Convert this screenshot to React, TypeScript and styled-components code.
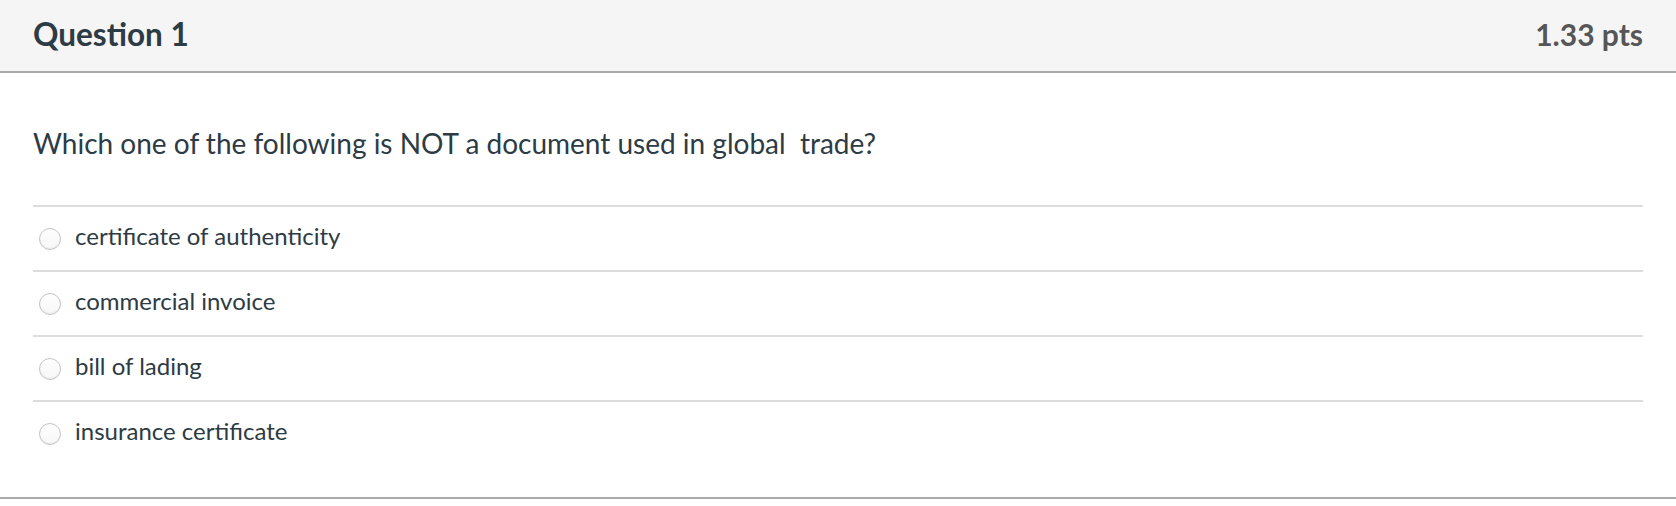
import React, { useState } from 'react';
import styled, { createGlobalStyle } from 'styled-components';

const GlobalStyle = createGlobalStyle`
  html, body {
    margin: 0;
    padding: 0;
    background: #fff;
    font-family: Lato, "Open Sans", "Liberation Sans", sans-serif;
  }
`;

const Card = styled.div`
  border-bottom: 2px solid #aaaaaa;
  margin-bottom: 6px;
`;

const Header = styled.div`
  height: 73px;
  box-sizing: border-box;
  padding: 0 33px 4px;
  display: flex;
  align-items: center;
  justify-content: space-between;
  background: #f5f5f5;
  border-bottom: 2px solid #aaaaaa;
`;

const Title = styled.h2`
  margin: 0;
  font-size: 31.5px;
  font-weight: 700;
  color: #2d3b45;
`;

const Points = styled.div`
  font-size: 30px;
  font-weight: 700;
  color: #565656;
`;

const Body = styled.div`
  padding: 0 33px 32px;
`;

const QuestionText = styled.p`
  margin: 0;
  padding: 50px 0 42px;
  font-size: 28px;
  line-height: 40px;
  color: #2d3b45;
  white-space: pre-wrap;
`;

const AnswerRow = styled.label`
  height: 65px;
  box-sizing: border-box;
  display: flex;
  align-items: center;
  gap: 14px;
  border-top: 2px solid #dddddd;
  padding-left: 6px;
  cursor: pointer;
`;

const Radio = styled.span<{ $checked: boolean }>`
  width: 22px;
  height: 22px;
  box-sizing: border-box;
  border-radius: 50%;
  border: 1px solid #c4c4c4;
  background: linear-gradient(#ffffff, #f6f6f6);
  box-shadow: inset 0 -1px 1px rgba(0, 0, 0, 0.05);
  display: flex;
  align-items: center;
  justify-content: center;
  flex-shrink: 0;
  &::after {
    content: '';
    width: 10px;
    height: 10px;
    border-radius: 50%;
    background: #2d3b45;
    display: ${(p) => (p.$checked ? 'block' : 'none')};
  }
`;

const AnswerText = styled.span`
  font-size: 24px;
  color: #2d3b45;
  padding-bottom: 6px;
`;

const answers = [
  'certificate of authenticity',
  'commercial invoice',
  'bill of lading',
  'insurance certificate',
];

const App: React.FC = () => {
  const [selected, setSelected] = useState<number | null>(null);

  return (
    <>
      <GlobalStyle />
      <Card>
        <Header>
          <Title>Question 1</Title>
          <Points>1.33 pts</Points>
        </Header>
        <Body>
          <QuestionText>{'Which one of the following is NOT a document used in global  trade?'}</QuestionText>
          {answers.map((answer, index) => (
            <AnswerRow key={`answer_${index}`} onClick={() => setSelected(index)}>
              <Radio $checked={selected === index} />
              <AnswerText>{answer}</AnswerText>
            </AnswerRow>
          ))}
        </Body>
      </Card>
    </>
  );
};

export default App;
